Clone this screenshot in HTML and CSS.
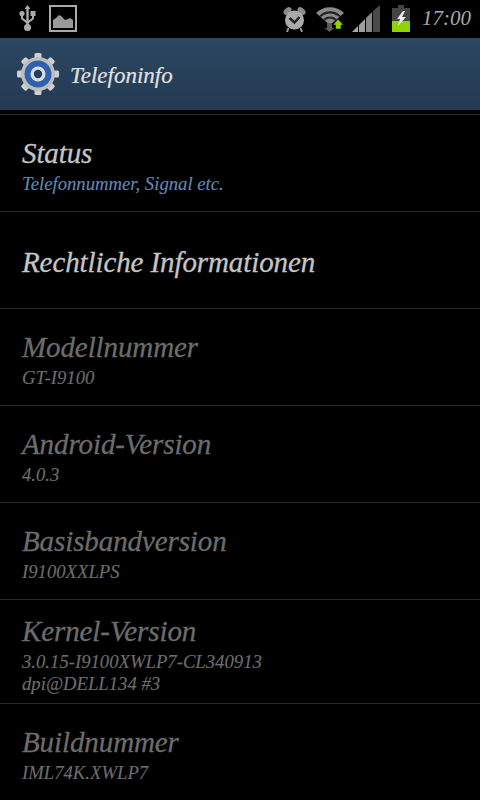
FILE: index.html
```html
<!DOCTYPE html>
<html lang="de">
<head>
    <meta charset="UTF-8">
    <title>Telefoninfo</title>
    <link rel="stylesheet" href="styles.css">
</head>
<body>
    <div class="statusbar">
        <div class="status-left">
            <svg width="17" height="27" viewBox="0 0 17 27">
                <path d="M8.500 0 L11.500 4 L9.700 4 L9.700 21 L7.300 21 L7.300 4 L5.500 4 Z" fill="#aaa"/>
                <path d="M8.500 19 L2 14 L2 10 L4 10 L4 13 L8.500 16.500 L13 13 L13 10 L15 10 L15 14 Z" fill="#aaa"/>
                <circle cx="3" cy="8.500" r="2.600" fill="#aaa"/>
                <rect x="11.500" y="6" width="5" height="5" fill="#aaa"/>
                <circle cx="8.500" cy="22.500" r="3.500" fill="#aaa"/>
            </svg>
            <svg width="28" height="27" viewBox="0 0 28 27">
                <rect x="1" y="1" width="26" height="25" fill="#000" stroke="#aaa" stroke-width="2"/>
                <path d="M4 23 L4 15 L7 13 L10 10 L12 11 L16 15 L19 14 L21 13 L24 15 L24 23 Z" fill="#999"/>
            </svg>
        </div>
        <div class="status-right">
            <svg width="24" height="27" viewBox="0 0 24 27">
                <ellipse cx="4.500" cy="6" rx="4.500" ry="3" transform="rotate(-40 4.500 6)" fill="#8c8c8c"/>
                <ellipse cx="18.500" cy="6" rx="4.500" ry="3" transform="rotate(40 18.500 6)" fill="#8c8c8c"/>
                <circle cx="11.500" cy="15" r="9.500" fill="#aaa"/>
                <path d="M5.500 23 L4 27 M17.500 23 L19 27" stroke="#999" stroke-width="2"/>
                <path d="M6.500 13 L11.500 17.500 L16.500 12" fill="none" stroke="#222" stroke-width="2.500"/>
            </svg>
            <svg class="wifi" width="28" height="27" viewBox="0 0 28 27">
                <path d="M0 8 A20 20 0 0 1 28 8 L14 20 Z" fill="#8a8a8a"/>
                <path d="M3.500 10.500 A15 15 0 0 1 24.500 10.500 L23 12 A13 13 0 0 0 5 12 Z" fill="#222"/>
                <path d="M7.500 14 A10 10 0 0 1 20.500 14 L19 15.500 A8 8 0 0 0 9 15.500 Z" fill="#222"/>
                <path d="M11 18 L11 23 L8.500 23 L13.500 27 L18.500 23 L16 23 L16 18 Z" fill="#5a5a5a"/>
                <path d="M22 14 L27.500 20 L25 20 L25 24 L19.500 24 L19.500 20 L17 20 Z" fill="#8fd400" stroke="#000" stroke-width="0.500"/>
            </svg>
            <svg width="28" height="27" viewBox="0 0 28 27">
                <path d="M0 27 L6 21 L6 27 Z" fill="#aaa"/>
                <path d="M7 20 L13 14 L13 27 L7 27 Z" fill="#a0a0a0"/>
                <path d="M14 13 L20 7 L20 27 L14 27 Z" fill="#888"/>
                <path d="M21 6 L28 0 L28 27 L21 27 Z" fill="#4a4a4a"/>
            </svg>
            <svg class="battery" width="18" height="27" viewBox="0 0 18 27">
                <rect x="6" y="0" width="6" height="3" fill="#444"/>
                <rect x="0" y="3" width="18" height="13" fill="#444"/>
                <rect x="0" y="16" width="18" height="11" fill="#8fd400"/>
                <path d="M11 6 L5 14 L8 14 L6 21 L14 12 L10 12 L13 6 Z" fill="#eee"/>
            </svg>
            <span class="clock">17:00</span>
        </div>
    </div>

    <div class="actionbar">
        <svg class="gear" width="42" height="44" viewBox="0 0 42 44">
            <g fill="#cfcfcf">
                <rect x="17.500" y="1" width="7" height="42" rx="1.500"/>
                <rect x="17.500" y="1" width="7" height="42" rx="1.500" transform="rotate(45 21 22)"/>
                <rect x="17.500" y="1" width="7" height="42" rx="1.500" transform="rotate(90 21 22)"/>
                <rect x="17.500" y="1" width="7" height="42" rx="1.500" transform="rotate(135 21 22)"/>
            </g>
            <circle cx="21" cy="22" r="17" fill="#bdbdbd"/>
            <circle cx="21" cy="22" r="13.500" fill="#2f62ac"/>
            <circle cx="21" cy="22" r="7.500" fill="#d8dde2"/>
            <circle cx="21" cy="22" r="4.200" fill="#24405c"/>
        </svg>
        <span class="actionbar-title">Telefoninfo</span>
    </div>
    <div class="actionbar-edge"></div>

    <div class="list">
        <div class="row">
            <div class="row-title">Status</div>
            <div class="row-sub accent">Telefonnummer, Signal etc.</div>
        </div>
        <div class="row">
            <div class="row-title">Rechtliche Informationen</div>
        </div>
        <div class="row off">
            <div class="row-title">Modellnummer</div>
            <div class="row-sub">GT-I9100</div>
        </div>
        <div class="row off">
            <div class="row-title">Android-Version</div>
            <div class="row-sub">4.0.3</div>
        </div>
        <div class="row off">
            <div class="row-title">Basisbandversion</div>
            <div class="row-sub">I9100XXLPS</div>
        </div>
        <div class="row off tall">
            <div class="row-title">Kernel-Version</div>
            <div class="row-sub">3.0.15-I9100XWLP7-CL340913<br>dpi@DELL134 #3</div>
        </div>
        <div class="row off">
            <div class="row-title">Buildnummer</div>
            <div class="row-sub">IML74K.XWLP7</div>
        </div>
    </div>
</body>
</html>
```

FILE: styles.css
```css
html, body {
    height: 100%;
}

body {
    margin: 0;
    background: #000;
    overflow: hidden;
    font-family: "Liberation Serif", serif;
    font-style: italic;
    color: #c4c4c4;
}

.statusbar {
    height: 38px;
    box-sizing: border-box;
    display: flex;
    justify-content: space-between;
    align-items: center;
    padding: 0 9px 1px 19px;
}

.status-left, .status-right {
    display: flex;
    align-items: center;
}

.status-left {
    gap: 13px;
}

.status-right {
    gap: 8px;
}

.wifi {
    margin-left: 1px;
}

.battery {
    margin-left: 4px;
}

.clock {
    font-size: 21px;
    color: #aaa;
    margin-left: 4px;
}

.actionbar {
    height: 72px;
    display: flex;
    align-items: center;
    gap: 11px;
    padding-left: 17px;
    background: linear-gradient(#2c4763, #233a52);
}

.actionbar-title {
    font-size: 23px;
    color: #e0e0e0;
    -webkit-text-stroke: 0.2px #e0e0e0;
    padding-top: 4px;
}

.actionbar-edge {
    height: 5px;
    box-sizing: border-box;
    border-bottom: 1px solid #2a2a2a;
}

.row {
    height: 97px;
    box-sizing: border-box;
    border-bottom: 1px solid #2a2a2a;
    padding: 4px 22px 0;
    display: flex;
    flex-direction: column;
    justify-content: center;
}

.row.tall {
    height: 104px;
}

.row-title {
    font-size: 29px;
    letter-spacing: -0.1px;
    line-height: 36px;
    -webkit-text-stroke: 0.3px currentColor;
}

.row-sub {
    font-size: 18.700px;
    line-height: 22px;
    margin-top: 2px;
    -webkit-text-stroke: 0.15px currentColor;
}

.accent {
    color: #6088b4;
}

.off {
    color: #6c6c6c;
}
```
